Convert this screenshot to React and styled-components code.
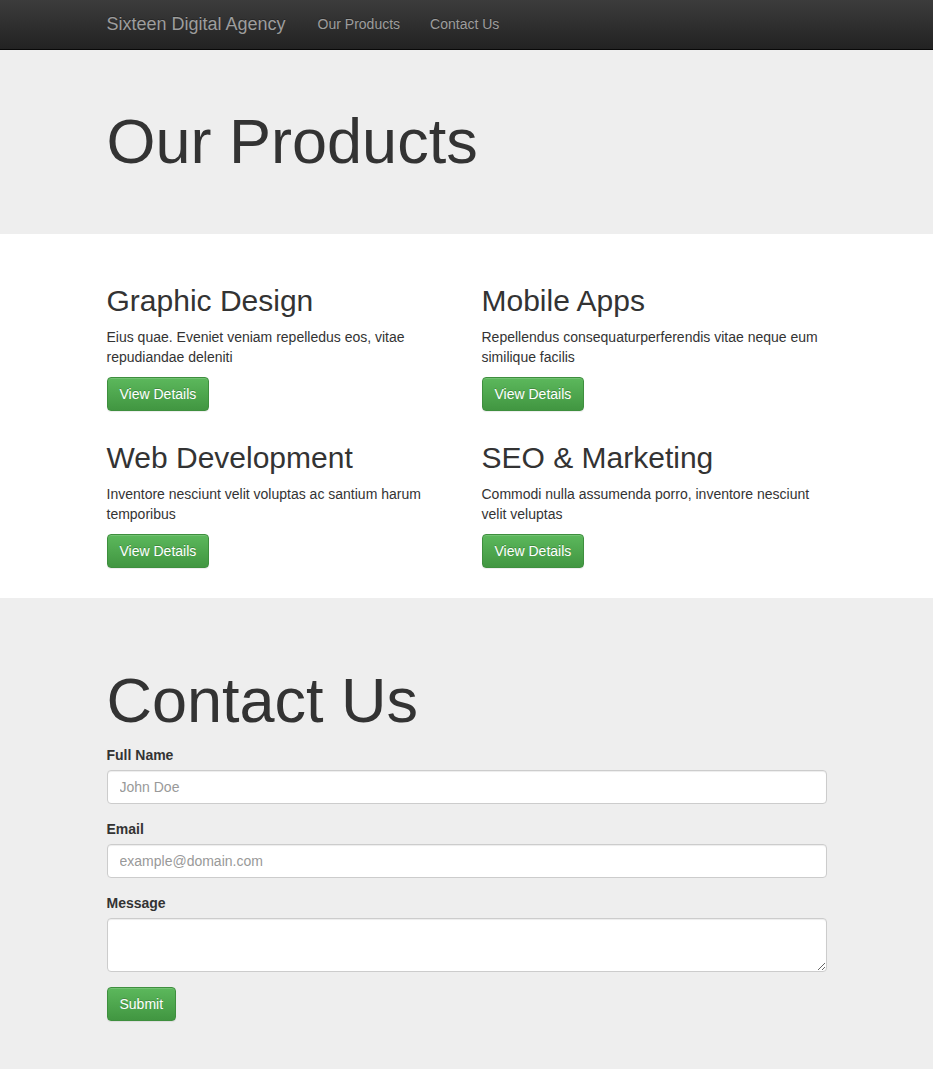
import React from 'react';
import styled, {createGlobalStyle} from 'styled-components';

const GlobalStyle = createGlobalStyle`
  * {
    box-sizing: border-box;
  }
  html, body {
    margin: 0;
    padding: 0;
    background-color: #eee;
  }
  body {
    font-family: "Liberation Sans", Arial, Helvetica, sans-serif;
    font-size: 14px;
    line-height: 1.42857143;
    color: #333;
  }
`;

const Container = styled.div`
  width: 750px;
  margin: 0 auto;
  padding: 0 15px;
`;

const Navbar = styled.nav`
  height: 50px;
  background-image: linear-gradient(to bottom, #3c3c3c 0%, #222 100%);
  border-bottom: 1px solid #080808;
`;

const NavInner = styled(Container)`
  display: flex;
  align-items: center;
  height: 49px;
`;

const Brand = styled.a`
  font-size: 18px;
  line-height: 20px;
  color: #9d9d9d;
  text-decoration: none;
  text-shadow: 0 -1px 0 rgba(0, 0, 0, 0.25);
  padding: 14px 17px 15px 0;
`;

const NavLink = styled.a`
  font-size: 14px;
  line-height: 20px;
  color: #9d9d9d;
  text-decoration: none;
  text-shadow: 0 -1px 0 rgba(0, 0, 0, 0.25);
  padding: 14px 15px 15px;
`;

const Jumbotron = styled.header`
  background-color: #eee;
  padding: 57px 0 58px;
`;

const BigTitle = styled.h1`
  margin: 0 0 ${props => props.$gap || 0}px;
  font-size: 63px;
  font-weight: 500;
  line-height: 69px;
  color: #333;
`;

const ProductsSection = styled.section`
  background-color: #fff;
  padding: 30px 0 20px;
`;

const ProductGrid = styled.div`
  display: grid;
  grid-template-columns: 1fr 1fr;
  margin: 0 -15px;
`;

const Product = styled.div`
  padding: 0 15px;
`;

const ProductTitle = styled.h2`
  margin: 20px 0 10px;
  font-size: 30px;
  font-weight: 500;
  line-height: 1.1;
  color: #333;
`;

const Text = styled.p`
  margin: 0 0 10px;
`;

const ButtonRow = styled.p`
  margin: 0 0 10px;
  display: flex;
`;

const SuccessButton = styled.button`
  display: inline-block;
  padding: 6px 12px;
  font-family: inherit;
  font-size: 14px;
  line-height: 20px;
  color: #fff;
  text-shadow: 0 -1px 0 rgba(0, 0, 0, 0.2);
  background-image: linear-gradient(to bottom, #5cb85c 0%, #419641 100%);
  border: 1px solid #3e8f3e;
  border-radius: 4px;
  box-shadow: inset 0 1px 0 rgba(255, 255, 255, 0.15), 0 1px 1px rgba(0, 0, 0, 0.075);
  cursor: pointer;
`;

const ContactSection = styled.section`
  background-color: #eee;
  padding: 68px 0 48px;
`;

const FormGroup = styled.div`
  margin-bottom: 15px;
`;

const Label = styled.label`
  display: block;
  margin-bottom: 5px;
  font-weight: 700;
`;

const fieldStyles = `
  display: block;
  width: 100%;
  padding: 6px 12px;
  font-family: inherit;
  font-size: 14px;
  line-height: 20px;
  color: #555;
  background-color: #fff;
  border: 1px solid #ccc;
  border-radius: 4px;
  box-shadow: inset 0 1px 1px rgba(0, 0, 0, 0.075);
  outline: none;

  &::placeholder {
    color: #999;
  }
`;

const Input = styled.input`
  ${fieldStyles}
  height: 34px;
`;

const TextArea = styled.textarea`
  ${fieldStyles}
  height: 54px;
  resize: vertical;
`;

const products = [
  {
    title: 'Graphic Design',
    text: 'Eius quae. Eveniet veniam repelledus eos, vitae repudiandae deleniti',
  },
  {
    title: 'Mobile Apps',
    text: 'Repellendus consequaturperferendis vitae neque eum similique facilis',
  },
  {
    title: 'Web Development',
    text: 'Inventore nesciunt velit voluptas ac santium harum temporibus',
  },
  {
    title: 'SEO & Marketing',
    text: 'Commodi nulla assumenda porro, inventore nesciunt velit veluptas',
  },
];

const App = () => {
  return (
    <>
      <GlobalStyle />
      <Navbar>
        <NavInner>
          <Brand href="#">Sixteen Digital Agency</Brand>
          <NavLink href="#products">Our Products</NavLink>
          <NavLink href="#contact">Contact Us</NavLink>
        </NavInner>
      </Navbar>

      <Jumbotron>
        <Container>
          <BigTitle>Our Products</BigTitle>
        </Container>
      </Jumbotron>

      <ProductsSection id="products">
        <Container>
          <ProductGrid>
            {products.map(item => (
              <Product key={item.title}>
                <ProductTitle>{item.title}</ProductTitle>
                <Text>{item.text}</Text>
                <ButtonRow>
                  <SuccessButton>View Details</SuccessButton>
                </ButtonRow>
              </Product>
            ))}
          </ProductGrid>
        </Container>
      </ProductsSection>

      <ContactSection id="contact">
        <Container>
          <BigTitle $gap={10}>Contact Us</BigTitle>
          <form onSubmit={e => e.preventDefault()}>
            <FormGroup>
              <Label htmlFor="name">Full Name</Label>
              <Input id="name" type="text" placeholder="John Doe" />
            </FormGroup>
            <FormGroup>
              <Label htmlFor="email">Email</Label>
              <Input id="email" type="email" placeholder="example@domain.com" />
            </FormGroup>
            <FormGroup>
              <Label htmlFor="message">Message</Label>
              <TextArea id="message" rows={2} />
            </FormGroup>
            <SuccessButton type="submit">Submit</SuccessButton>
          </form>
        </Container>
      </ContactSection>
    </>
  );
};

export default App;
